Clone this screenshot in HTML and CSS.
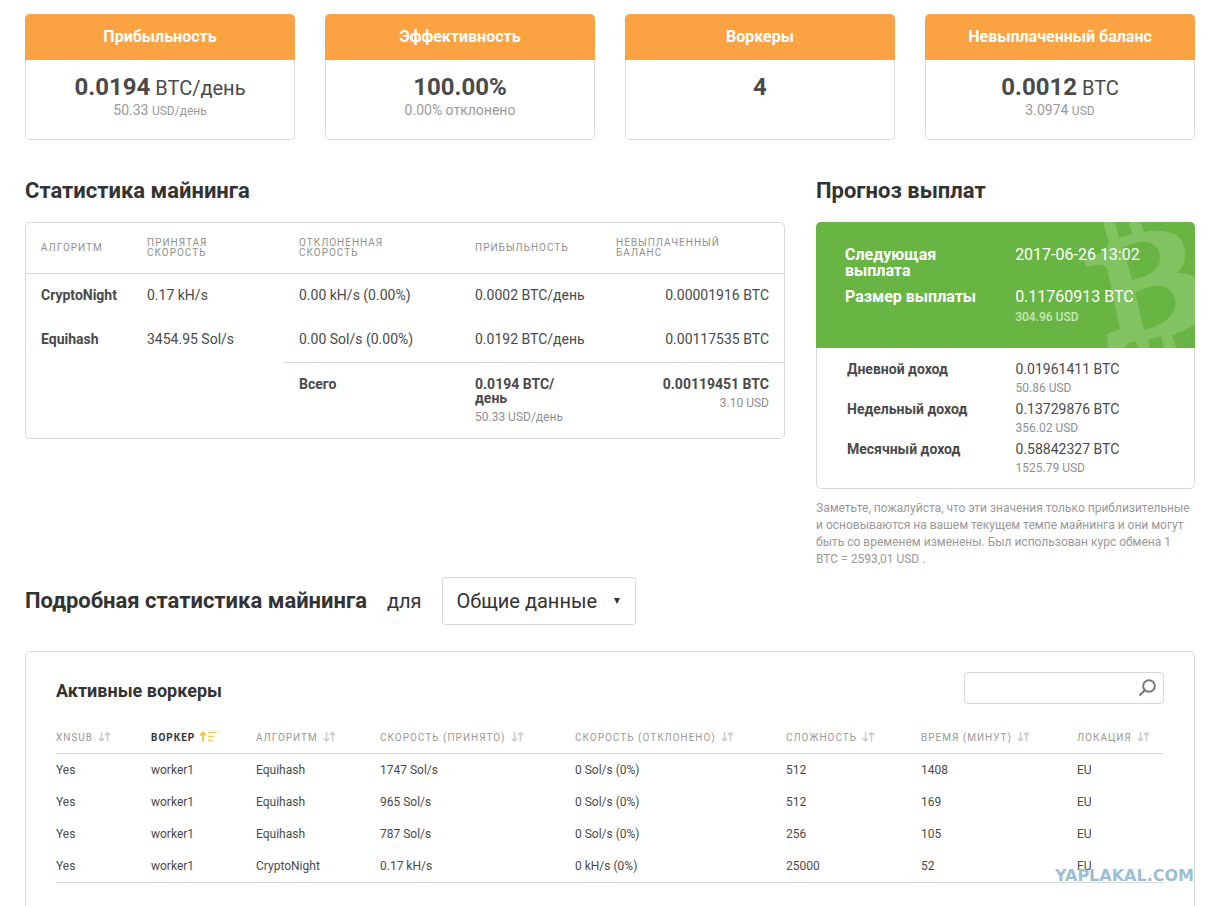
FILE: index.html
```
<!DOCTYPE html>
<html lang="ru">
<head>
<meta charset="utf-8">
<meta name="viewport" content="width=device-width, initial-scale=1">
<title>Статистика майнинга</title>
<link rel="stylesheet" href="styles.css">
</head>
<body>
<svg class="sprite" aria-hidden="true">
  <symbol id="sort" viewBox="0 0 14 12">
    <path d="M3.5 1v9M.8 7.2l2.700 2.800 2.700-2.800M9.500 10.500V1.500M6.800 4.300l2.700-2.800 2.700 2.800" fill="none" stroke="currentColor" stroke-width="1.500"/>
  </symbol>
  <symbol id="sort-active" viewBox="0 0 18 12">
    <path d="M4 11V1.500M1 4.700l3-3.200 3 3.200" fill="none" stroke="currentColor" stroke-width="1.700"/>
    <path d="M9 1.500h8.500M9 5.500h6.500M9 9.500h4.500" fill="none" stroke="currentColor" stroke-width="1.700" opacity=".85"/>
  </symbol>
</svg>
<main class="page">
  <section class="summary">
    <article class="tile">
      <h2 class="tile-title">Прибыльность</h2>
      <div class="tile-body">
        <p class="tile-value"><b>0.0194</b> BTC/день</p>
        <p class="tile-note">50.33 <small>USD/день</small></p>
      </div>
    </article>
    <article class="tile">
      <h2 class="tile-title">Эффективность</h2>
      <div class="tile-body">
        <p class="tile-value"><b>100.00%</b></p>
        <p class="tile-note">0.00% отклонено</p>
      </div>
    </article>
    <article class="tile">
      <h2 class="tile-title">Воркеры</h2>
      <div class="tile-body">
        <p class="tile-value"><b>4</b></p>
      </div>
    </article>
    <article class="tile">
      <h2 class="tile-title">Невыплаченный баланс</h2>
      <div class="tile-body">
        <p class="tile-value"><b>0.0012</b> BTC</p>
        <p class="tile-note">3.0974 <small>USD</small></p>
      </div>
    </article>
  </section>

  <div class="overview">
    <section>
      <h2 class="heading">Статистика майнинга</h2>
      <div class="card">
        <table class="stats">
          <colgroup><col class="s-algo"><col class="s-acc"><col class="s-rej"><col class="s-prof"><col class="s-bal"></colgroup>
          <thead>
            <tr><th>Алгоритм</th><th>Принятая<br>скорость</th><th>Отклоненная<br>скорость</th><th>Прибыльность</th><th>Невыплаченный<br>баланс</th></tr>
          </thead>
          <tbody>
            <tr><td><b>CryptoNight</b></td><td>0.17 kH/s</td><td>0.00 kH/s (0.00%)</td><td>0.0002 BTC/день</td><td class="num">0.00001916 BTC</td></tr>
            <tr><td><b>Equihash</b></td><td>3454.95 Sol/s</td><td>0.00 Sol/s (0.00%)</td><td>0.0192 BTC/день</td><td class="num">0.00117535 BTC</td></tr>
          </tbody>
          <tfoot>
            <tr><td></td><td></td><td class="total"><b>Всего</b></td><td class="total"><b>0.0194 BTC/<br>день</b><span class="usd">50.33 USD/день</span></td><td class="total num"><b>0.00119451 BTC</b><span class="usd">3.10 USD</span></td></tr>
          </tfoot>
        </table>
      </div>
    </section>

    <section>
      <h2 class="heading">Прогноз выплат</h2>
      <div class="forecast">
        <div class="payout">
          <svg class="coin" viewBox="0 0 115 126" aria-hidden="true">
            <path fill-rule="evenodd" d="M23 0h12l4 16 13-4-3-12h12l3 10C82 7 98 9 103 22c4 11 2 22-6 29 7 0 13 1 18 4v47c-8 6-16 9-23 11l4 13H84l-3-12-13 4 2 8H58l-2-7-9 2-2 6H28l-1-15 13-5-12-57c-1-6-5-8-12-7l-10 2-2-7c9-4 17-7 23-12l2-5zM43 25l9 33c7-2 12-3 17-6 9-5 13-14 10-22-4-10-13-12-23-9zM55 70l9 38c7-2 13-4 18-7 10-6 15-14 13-24-3-11-14-16-25-12z"/>
          </svg>
          <dl class="pairs">
            <dt>Следующая<br>выплата</dt><dd>2017-06-26 13:02</dd>
            <dt>Размер выплаты</dt><dd>0.11760913 BTC<span class="usd">304.96 USD</span></dd>
          </dl>
        </div>
        <dl class="pairs income">
          <dt>Дневной доход</dt><dd>0.01961411 BTC<span class="usd">50.86 USD</span></dd>
          <dt>Недельный доход</dt><dd>0.13729876 BTC<span class="usd">356.02 USD</span></dd>
          <dt>Месячный доход</dt><dd>0.58842327 BTC<span class="usd">1525.79 USD</span></dd>
        </dl>
      </div>
      <p class="disclaimer">Заметьте, пожалуйста, что эти значения только приблизительные и основываются на вашем текущем темпе майнинга и они могут быть со временем изменены. Был использован курс обмена 1 BTC = 2593,01 USD .</p>
    </section>
  </div>

  <div class="detail-bar">
    <h2 class="detail-title">Подробная статистика майнинга</h2>
    <label class="detail-label" for="scope">для</label>
    <div class="select">
      <select id="scope"><option>Общие данные</option></select>
      <svg class="caret" viewBox="0 0 6 8" aria-hidden="true"><path d="M0 1h6L3 7z"/></svg>
    </div>
  </div>

  <section class="workers">
    <header class="workers-head">
      <h3 class="workers-title">Активные воркеры</h3>
      <form class="search">
        <input type="search" aria-label="Поиск">
        <button type="submit" aria-label="Найти">
          <svg viewBox="0 0 18 18" aria-hidden="true"><circle cx="11" cy="7" r="5.800"/><path d="M6.800 11.200L1.500 16.500"/></svg>
        </button>
      </form>
    </header>
    <table class="grid">
      <colgroup><col class="w-sub"><col class="w-name"><col class="w-algo"><col class="w-acc"><col class="w-rej"><col class="w-diff"><col class="w-time"><col class="w-loc"></colgroup>
      <thead>
        <tr>
          <th><button>XNSUB<svg><use href="#sort"/></svg></button></th>
          <th aria-sort="ascending"><button class="active">Воркер<svg><use href="#sort-active"/></svg></button></th>
          <th><button>Алгоритм<svg><use href="#sort"/></svg></button></th>
          <th><button>Скорость (принято)<svg><use href="#sort"/></svg></button></th>
          <th><button>Скорость (отклонено)<svg><use href="#sort"/></svg></button></th>
          <th><button>Сложность<svg><use href="#sort"/></svg></button></th>
          <th><button>Время (минут)<svg><use href="#sort"/></svg></button></th>
          <th><button>Локация<svg><use href="#sort"/></svg></button></th>
        </tr>
      </thead>
      <tbody>
        <tr><td>Yes</td><td>worker1</td><td>Equihash</td><td>1747 Sol/s</td><td>0 Sol/s (0%)</td><td>512</td><td>1408</td><td>EU</td></tr>
        <tr><td>Yes</td><td>worker1</td><td>Equihash</td><td>965 Sol/s</td><td>0 Sol/s (0%)</td><td>512</td><td>169</td><td>EU</td></tr>
        <tr><td>Yes</td><td>worker1</td><td>Equihash</td><td>787 Sol/s</td><td>0 Sol/s (0%)</td><td>256</td><td>105</td><td>EU</td></tr>
        <tr><td>Yes</td><td>worker1</td><td>CryptoNight</td><td>0.17 kH/s</td><td>0 kH/s (0%)</td><td>25000</td><td>52</td><td>EU</td></tr>
      </tbody>
    </table>
    <span class="watermark">YAPLAKAL.COM</span>
  </section>
</main>
</body>
</html>
```
FILE: styles.css
```
* { box-sizing: border-box; }
body {
  margin: 0;
  background: #fff;
  color: #4a4a4a;
  font: 14px/14px Roboto, "Liberation Sans", sans-serif;
}
h2, h3, p, dl, dd { margin: 0; }
button, input, select { font: inherit; color: inherit; }
.sprite { display: none; }
.page { padding: 14px 24px 0 25px; }

.summary {
  display: grid;
  grid-template-columns: repeat(4, 1fr);
  gap: 30px;
}
.tile {
  border: 1px solid #dcdcdc;
  border-top: 0;
  border-radius: 5px;
  min-height: 126px;
}
.tile-title {
  margin: 0 -1px;
  padding: 11px 10px;
  border-radius: 5px 5px 0 0;
  background: #fba342;
  color: #fff;
  font-size: 16px;
  line-height: 24px;
  font-weight: 700;
  text-align: center;
}
.tile-body { padding-top: 13px; text-align: center; }
.tile-value { font-size: 20px; line-height: 28px; }
.tile-value b { font-size: 24px; font-weight: 700; }
.tile-note { color: #999; line-height: 16px; }
.tile-note small { font-size: 12px; }

.overview {
  display: grid;
  grid-template-columns: 760fr 379fr;
  gap: 31px;
  padding-top: 37px;
}
.heading {
  margin-bottom: 17px;
  color: #333;
  font-size: 22px;
  line-height: 28px;
  font-weight: 700;
}
.card { border: 1px solid #d9d9d9; border-radius: 5px; }
table { width: 100%; border-spacing: 0; table-layout: fixed; }
th { text-align: left; font-weight: 400; }

.stats th { padding: 15px; }
.stats td { padding: 14px 15px 16px; }
.stats th {
  border-bottom: 1px solid #d9d9d9;
  color: #8f8f8f;
  font-size: 10px;
  line-height: 10px;
  letter-spacing: 1px;
  text-transform: uppercase;
}
.stats td { vertical-align: top; white-space: nowrap; }
.stats .num { text-align: right; }
.stats .total { border-top: 1px solid #d9d9d9; padding-bottom: 14px; }
.s-algo { width: 106px; }
.s-acc { width: 152px; }
.s-rej { width: 176px; }
.s-prof { width: 141px; }
.usd {
  display: block;
  margin-top: 5px;
  color: #8f8f8f;
  font-size: 12px;
  line-height: 14px;
}

.forecast { border: 1px solid #d9d9d9; border-top: 0; border-radius: 5px; }
.payout {
  position: relative;
  margin: 0 -1px;
  padding: 25px 29px 24px;
  border-radius: 5px 5px 0 0;
  overflow: hidden;
  background: #69b543;
  color: #fff;
  font-size: 16px;
  line-height: 16px;
}
.payout .usd { color: #c7e8b6; font-weight: 500; }
.coin {
  position: absolute;
  top: 0;
  right: 0;
  height: 100%;
  fill: #81c361;
}
.pairs {
  position: relative;
  display: grid;
  grid-template-columns: 53% 47%;
  row-gap: 10px;
}
.pairs dt { font-weight: 700; }
.income { padding: 14px 29px 13px 30px; row-gap: 7px; }
.disclaimer {
  padding-top: 11px;
  color: #999;
  font-size: 12px;
  line-height: 17px;
}

.detail-bar {
  display: flex;
  align-items: center;
  gap: 20px;
  padding-top: 9px;
  color: #333;
}
.detail-title { font-size: 22px; line-height: 28px; font-weight: 700; }
.detail-label { font-size: 20px; line-height: 28px; }
.select { position: relative; }
.select select {
  width: 194px;
  height: 48px;
  padding: 0 34px 0 14px;
  border: 1px solid #d9d9d9;
  border-radius: 3px;
  background: #fff;
  font-size: 20px;
  line-height: 28px;
  appearance: none;
}
.caret {
  position: absolute;
  top: 20px;
  right: 16px;
  width: 6px;
  height: 8px;
  fill: #333;
  pointer-events: none;
}

.workers {
  position: relative;
  margin-top: 26px;
  padding: 20px 30px 40px;
  border: 1px solid #d9d9d9;
  border-radius: 5px;
}
.workers-head {
  display: flex;
  align-items: center;
  justify-content: space-between;
  margin-bottom: 16px;
}
.workers-title { color: #333; font-size: 18px; line-height: 24px; font-weight: 700; padding-top: 5px; }
.search {
  display: flex;
  width: 200px;
  height: 32px;
  border: 1px solid #d9d9d9;
  border-radius: 3px;
}
.search input { flex: 1; min-width: 0; border: 0; background: none; }
.search button { padding: 0 7px 0 4px; border: 0; background: none; line-height: 0; }
.search svg { width: 18px; height: 18px; fill: none; stroke: #777; stroke-width: 2; }

.grid { color: #4a4a4a; font-size: 12px; line-height: 16px; }
.grid th {
  height: 34px;
  padding: 3px 0 0;
  border-bottom: 1px solid #d9d9d9;
}
.grid th button {
  display: flex;
  align-items: center;
  gap: 5px;
  padding: 0;
  border: 0;
  background: none;
  color: #999;
  font-size: 10px;
  line-height: 16px;
  letter-spacing: 1px;
  text-transform: uppercase;
  white-space: nowrap;
}
.grid th button.active { gap: 4px; color: #333; font-weight: 700; }
.grid th svg { width: 14px; height: 12px; margin-bottom: 3px; color: #ccc; }
.grid th .active svg { width: 18px; color: #ecc33c; }
.grid td { padding: 8px 0; }
.grid tbody tr:last-child td { border-bottom: 1px solid #d9d9d9; }
.w-sub { width: 95px; }
.w-name { width: 105px; }
.w-algo { width: 124px; }
.w-acc { width: 195px; }
.w-rej { width: 211px; }
.w-diff { width: 135px; }
.w-time { width: 156px; }

.watermark {
  position: absolute;
  right: 0;
  top: 214px;
  color: #9dbfd6;
  font: 700 16px/20px "DejaVu Sans", sans-serif;
}
```
